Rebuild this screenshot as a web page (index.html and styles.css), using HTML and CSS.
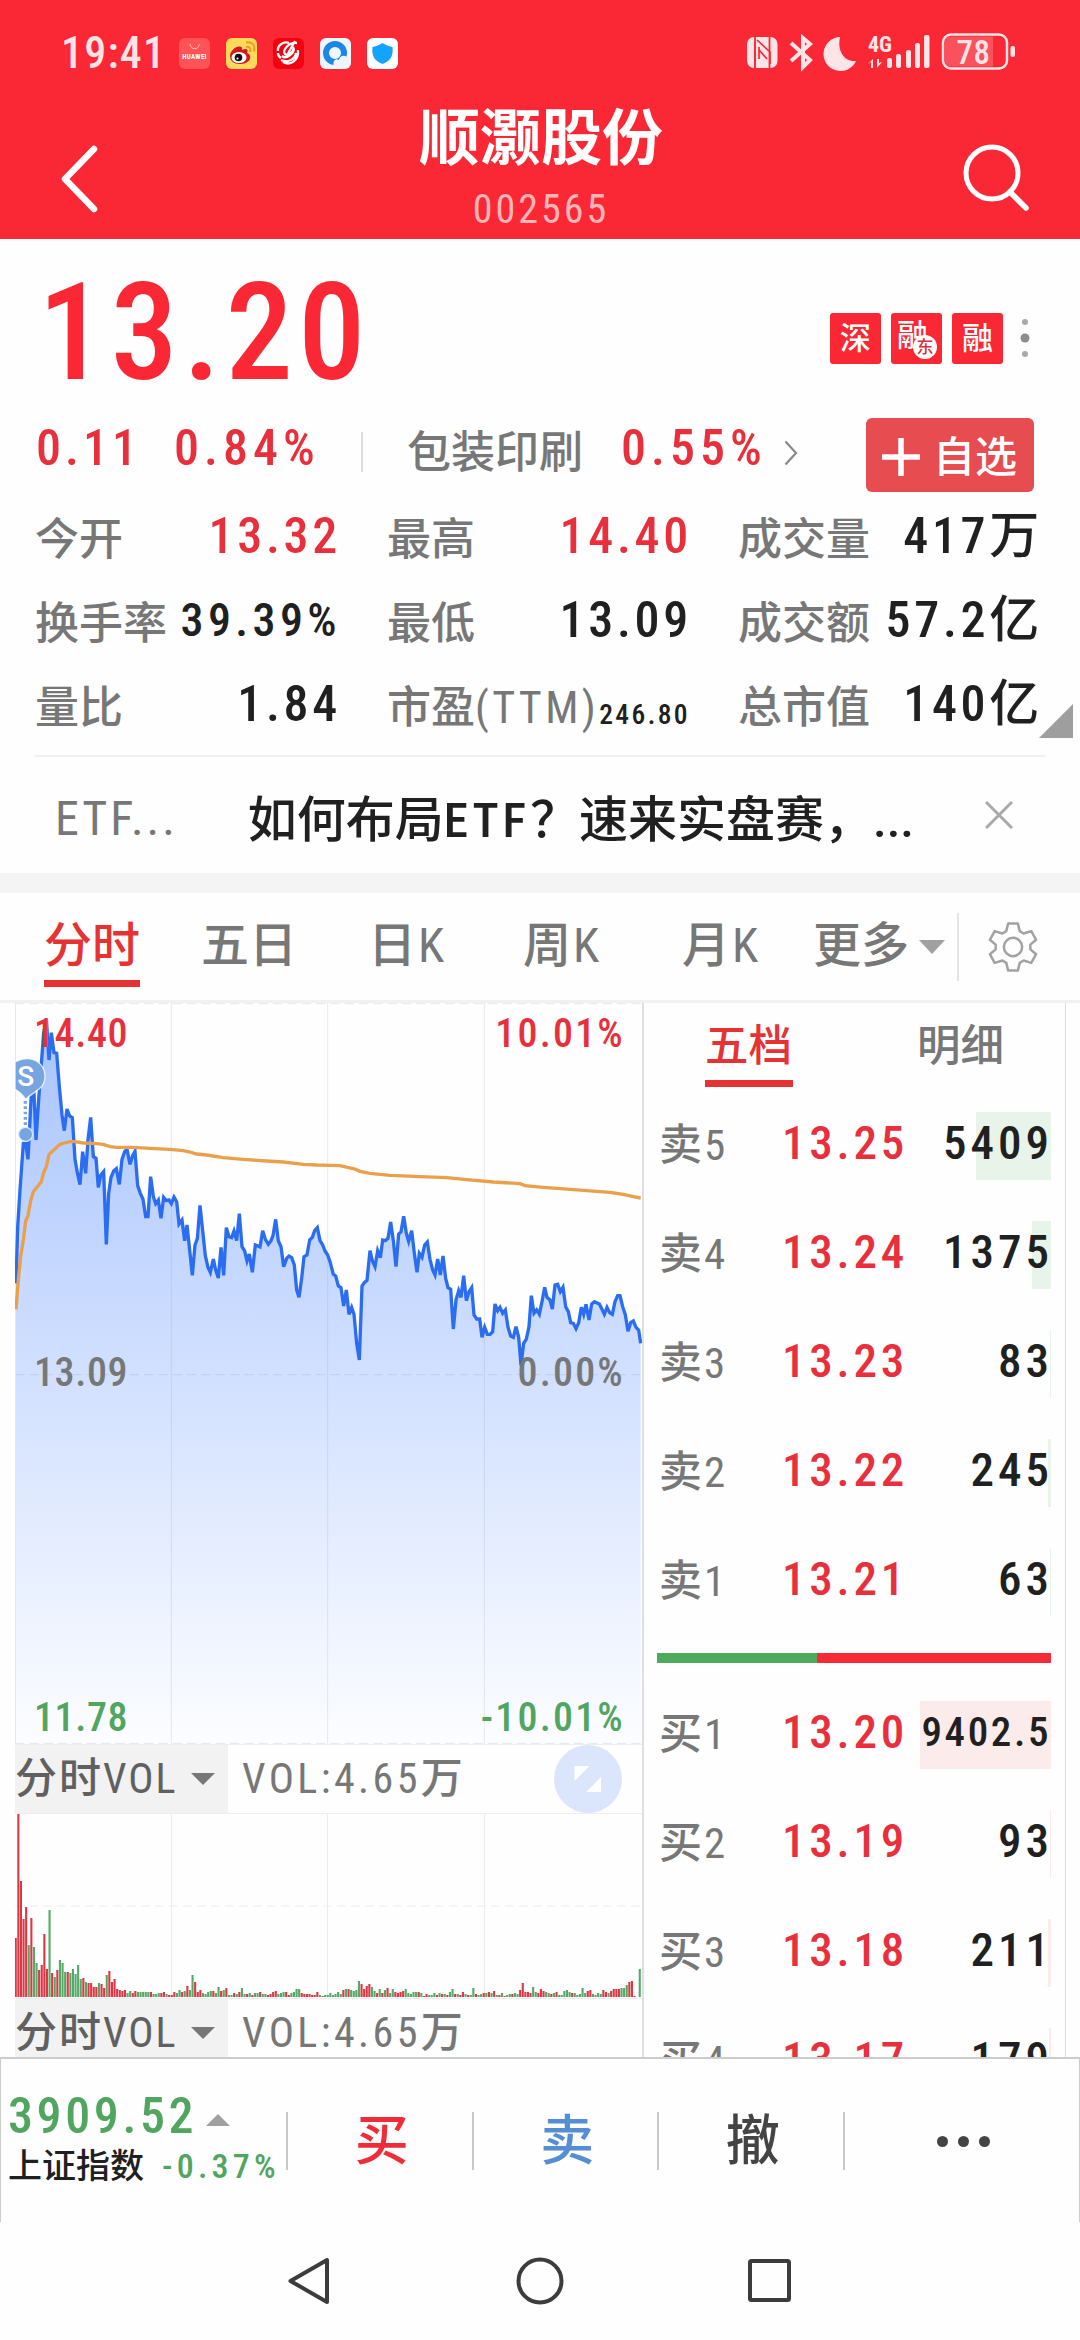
FILE: index.html
```html
<!DOCTYPE html>
<html lang="zh-CN">
	<head>
		<meta charset="utf-8">
		<meta name="viewport" content="width=1080">
		<title>顺灏股份 002565</title>
		<link rel="stylesheet" href="styles.css">
	</head>
	<body>
		<div class="header">
			<div class="status">
				<span class="clock">19:41</span>
				<div class="apps">
					<svg viewBox="0 0 31 31"><rect width="31" height="31" rx="6" fill="#ff5358"/><path d="M11 6a4.7 4.7 0 0 0 9.400 0" fill="none" stroke="#ffc9c9"/><text x="15.500" y="21" class="hw">HUAWEI</text></svg>
					<svg viewBox="0 0 31 31"><rect width="31" height="31" rx="6" fill="#ffd95a"/><path d="M4 18c0-5 7-11 11-9 2 0 1 3 1 3 4-2 7-1 5 3 6 2 4 11-7 11C8 26 4 23 4 18z" fill="#d7161f"/><ellipse cx="13" cy="19.500" rx="7.500" ry="5.500" fill="#fff"/><circle cx="12.500" cy="19.500" r="3.800" fill="#111"/><circle cx="11.500" cy="20.500" r="1" fill="#fff"/><path d="M20 9c4-1 5 2 4 5M20 4.500c7-1 9.500 4 8 9" fill="none" stroke="#ee9b20" stroke-width="2"/></svg>
					<svg viewBox="0 0 31 31"><rect width="31" height="31" rx="6" fill="#f5000f"/><path d="M24 5C15 4 9 13 12 16s10-3 8-7c3 5-6 13-11 9M22 3L13 19M5 13C4 7 11 3 16 5M5 15c0 3 1 4 3 5M10 24c7 4 16-1 15-12M8 22c6 3 14 0 15-7" fill="none" stroke="#fff" stroke-width="2.300"/></svg>
					<svg viewBox="0 0 31 31"><rect width="31" height="31" rx="6" fill="#eef6ff"/><circle cx="15" cy="15" r="9" fill="none" stroke="#1c86e6" stroke-width="6"/><path d="M14 28c-2-5 2-8 5-6 1-6 9-5 9 0 4 3 2 6-1 6z" fill="#eef6ff"/></svg>
					<svg viewBox="0 0 31 31"><rect width="31" height="31" rx="6" fill="#fff"/><path d="M15.500 5c3 2 6 3 10 4 1 9-2 14-10 17C7.500 23 4.500 18 5.500 9c4-1 7-2 10-4z" fill="#12a4ff"/></svg>
				</div>
				<svg class="sysicons" viewBox="745 30 275 46">
					<rect x="747" y="37" width="30.500" height="31" rx="7" fill="#fde4e6"/>
					<path d="M755 36.500v31.500M769.500 37v31.500" stroke="#fa2834" stroke-width="1.800"/>
					<path d="M757 40l13 12v12M755 42v26M759 47v12M759 50l8 9" fill="none" stroke="#fa2834" stroke-width="1.700"/>
					<g fill="#fde4e6">
						<path d="M840 37a17 17 0 1 0 16 24c-12 1-19-10-16-24z"/>
						<rect x="887" y="58" width="5" height="10" rx="2"/><rect x="896" y="54" width="5" height="14" rx="2"/><rect x="906" y="50" width="5" height="18" rx="2"/><rect x="915" y="43" width="5" height="25" rx="2"/><rect x="924" y="35" width="5.500" height="33" rx="2"/>
						<rect x="1010.500" y="46" width="4.500" height="11" rx="2"/>
						<path d="M868 64l5-5v9h-2v-6zM882 62l-5 6v-9h2v4z"/>
					</g>
					<path d="M791 43l19 17-7 7V38l7 6-19 17" fill="none" stroke="#fde4e6" stroke-width="4"/>
					<rect x="943" y="34.500" width="64" height="34" rx="8" fill="none" stroke="#fde4e6" stroke-width="2.500"/>
					<path d="M951 36.500h42v30h-42q-6 0-6-6v-18q0-6 6-6z" fill="#fb515c"/>
					<text x="868" y="52" class="net">4G</text>
					<text x="956.500" y="63.500" class="bat">78</text>
				</svg>
			</div>
			<div class="title">
				<svg class="back" viewBox="0 0 40 70"><path d="M34 4L5 34l29 30" fill="none" stroke="#fff" stroke-width="6.500" stroke-linecap="round" stroke-linejoin="round"/></svg>
				<div class="name"><h1>顺灏股份</h1><p>002565</p></div>
				<svg class="search" viewBox="0 0 70 72"><circle cx="30" cy="31" r="26" fill="none" stroke="#fff" stroke-width="5"/><path d="M48 50l16 16" stroke="#fff" stroke-width="5.500" stroke-linecap="round"/></svg>
			</div>
		</div>

		<div class="quote">
			<div class="now">
				<b class="price">13.20</b>
				<div class="badges">
					<i>深</i><i class="dong">融<em>东</em></i><i>融</i>
					<svg viewBox="0 0 12 42"><circle cx="6" cy="5" r="3" fill="#aaa"/><circle cx="6" cy="21" r="4.500" fill="#8c8c8c"/><circle cx="6" cy="37" r="3" fill="#aaa"/></svg>
				</div>
			</div>
			<div class="change">
				<b class="c1">0.11</b><b class="c2">0.84%</b><span class="vline"></span><span class="sector">包装印刷</span><b class="c3">0.55%</b>
				<svg class="more" viewBox="0 0 14 26"><path d="M1.500 1.500L12 13 1.500 24.500" fill="none" stroke="#888" stroke-width="2.200"/></svg>
				<span class="add"><svg viewBox="0 0 38 38"><path d="M19 0v38M0 19h38" stroke="#fff" stroke-width="5.500"/></svg>自选</span>
			</div>
			<div class="stats">
				<div><span>今开</span><b class="red">13.32</b></div>
				<div><span>最高</span><b class="red">14.40</b></div>
				<div><span>成交量</span><b>417万</b></div>
				<div><span>换手率</span><b class="mid">39.39%</b></div>
				<div><span>最低</span><b>13.09</b></div>
				<div><span>成交额</span><b>57.2亿</b></div>
				<div><span>量比</span><b>1.84</b></div>
				<div><span>市盈<u>(TTM)</u></span><b class="small">246.80</b></div>
				<div><span>总市值</span><b>140亿</b></div>
			</div>
			<span class="corner"></span>
			<div class="news">
				<span>ETF...</span><b>如何布局<u>ETF</u>？速来实盘赛，...</b>
				<svg viewBox="0 0 28 28"><path d="M1 1l26 26M27 1L1 27" stroke="#aaa" stroke-width="3"/></svg>
			</div>
		</div>

		<div class="tabs">
			<span class="on">分时</span><span class="t2">五日</span><span class="t3">日K</span><span class="t4">周K</span><span class="t5">月K</span><span class="t6">更多</span><i class="down"></i>
			<svg viewBox="0 0 54 54"><path d="M22 2.500h10l2 8 4 2.500 8-2.500 5 9-6 5v5l6 5-5 9-8-2.500-4 2.500-2 8H22l-2-8-4-2.500-8 2.500-5-9 6-5v-5l-6-5 5-9 8 2.500 4-2.500z" fill="none" stroke="#a2a2a2" stroke-width="2.600" stroke-linejoin="round"/><circle cx="27" cy="27" r="9.500" fill="none" stroke="#a2a2a2" stroke-width="2.600"/></svg>
		</div>

		<div class="board">
			<div class="charts">
				<div class="trend">
					<!-- 3 units per px -->
					<svg viewBox="45 39 1881 2223">
						<defs><linearGradient id="fill" x1="0" y1="75" x2="0" y2="2262" gradientUnits="userSpaceOnUse"><stop offset="0" stop-color="#a8c4ff"/><stop offset="1" stop-color="#fcfdff"/></linearGradient></defs>
						<polygon id="area" fill="url(#fill)"/>
						<path d="M514 39v2223M983 39v2223M1453 39v2223" stroke="#758096" stroke-opacity=".16" stroke-width="3"/>
						<path d="M45 1154h1881M45 41h1881M45 2260h1881" stroke="#758096" stroke-opacity=".18" stroke-width="3" stroke-dasharray="28 15"/>
						<path d="M46.500 39v2223" stroke="#e6e8ee" stroke-width="3"/>
						<polyline id="line" fill="none" stroke="#2a6df0" stroke-width="10"/>
						<polyline id="avg" fill="none" stroke="#eaa04a" stroke-width="10"/>
						<path d="M45 216C95 190 135 220 135 258c0 40-30 42-58 70-10-15-18-22-32-30z" fill="#76a5df" stroke="#fff" stroke-opacity=".8" stroke-width="4"/>
						<path d="M76 330v90" stroke="#fff" stroke-width="15"/><path d="M76 333v80" stroke="#76a5df" stroke-width="10" stroke-dasharray="8 8"/>
						<circle cx="77" cy="433" r="21" fill="#76a5df" stroke="#d8e7fa" stroke-width="4"/>
						<text x="77" y="287" class="sell">S</text>
					</svg>
					<b class="lt red">14.40</b><b class="rt red">10.01%</b>
					<b class="lm">13.09</b><b class="rm">0.00%</b>
					<b class="lb">11.78</b><b class="rb">-10.01%</b>
				</div>
				<div class="bar"><span>分时VOL<i></i></span><em>VOL:4.65万</em>
					<svg class="expand" viewBox="0 0 68 68"><circle cx="34" cy="34" r="34" fill="#dbe5fb"/><path d="M20.500 21h15l-15 15zM47 32v15H32z" fill="#fff"/></svg>
				</div>
				<svg class="vol" id="vol" viewBox="0 0 627 184"><path d="M156.500 0v184M312.500 0v184M469.500 0v184" stroke="#ececec"/><path d="M0 92h627" stroke="#ececec" stroke-dasharray="9 5"/></svg>
				<div class="bar second"><span>分时VOL<i></i></span><em>VOL:4.65万</em></div>
			</div>
			<div class="book">
				<div class="head"><span class="on">五档</span><span>明细</span></div>
				<div class="row sells"><span>卖5</span><b>13.25</b><em>5409</em><i style="width:75px"></i></div>
				<div class="row sells"><span>卖4</span><b>13.24</b><em>1375</em><i style="width:19px"></i></div>
				<div class="row sells"><span>卖3</span><b>13.23</b><em>83</em><i style="width:1px"></i></div>
				<div class="row sells"><span>卖2</span><b>13.22</b><em>245</em><i style="width:3px"></i></div>
				<div class="row sells"><span>卖1</span><b>13.21</b><em>63</em><i style="width:1px"></i></div>
				<div class="ratio"><i style="width:160px"></i></div>
				<div class="row"><span>买1</span><b>13.20</b><em class="long">9402.5</em><i style="width:131px"></i></div>
				<div class="row"><span>买2</span><b>13.19</b><em>93</em><i style="width:1px"></i></div>
				<div class="row"><span>买3</span><b>13.18</b><em>211</em><i style="width:3px"></i></div>
				<div class="row"><span>买4</span><b>13.17</b><em>179</em><i style="width:2px"></i></div>
			</div>
		</div>

		<div class="trade">
			<div class="index">
				<p class="point">3909.52<i></i></p>
				<p class="pct"><span>上证指数</span><b>-0.37%</b></p>
			</div>
			<span class="buy">买</span><span class="sale">卖</span><span class="undo">撤</span>
			<span class="dots"><i></i><i></i><i></i></span>
		</div>
		<div class="nav">
			<svg viewBox="0 0 1080 118"><g fill="none" stroke="#3c3c3c" stroke-width="4" stroke-linejoin="round"><path d="M327 38v42L290.500 59z"/><circle cx="540" cy="59" r="21.500"/><rect x="750" y="39" width="39" height="39" rx="1.500"/></g></svg>
		</div>
		<script src="chart.js"></script>
	</body>
</html>
```
FILE: styles.css
```css
*{
	box-sizing: border-box;
	margin: 0;
	padding: 0;
}
body{
	width: 1080px;
	height: 2340px;
	overflow: hidden;
	background-color: #fefefe;
	color: #202020;
	font-family: Roboto, "Noto Sans CJK SC", sans-serif;
	font-weight: 450;
	font-stretch: 87%;
}
b{ font-weight: 500; }
i, em{ font-style: normal; }
u{ text-decoration: none; }
svg{ display: block; flex: none; }
.red{ color: #e8303c; }

/* header */
.header{
	height: 239px;
	background-color: #fa2834;
	color: #fff;
}
.status{
	display: flex;
	align-items: center;
	height: 88px;
	padding: 18px 60px 0 61px;
}
.clock{
	width: 118px;
	font-size: 44px;
	font-weight: 500;
	letter-spacing: 1.2px;
	color: #ffe3e5;
}
.apps{
	display: flex;
	gap: 16px;
}
.apps svg{ width: 31px; height: 31px; }
.hw{ font-size: 7px; font-weight: 700; fill: #fff; text-anchor: middle; letter-spacing: 0.3px; }
.sysicons{
	width: 275px;
	height: 46px;
	margin-left: auto;
}
.net{ font-size: 22px; font-weight: 700; fill: #fde4e6; }
.bat{ font-size: 33px; font-weight: 500; fill: #fde4e6; letter-spacing: 0.5px; }
.title{
	display: flex;
	justify-content: space-between;
	padding: 0 49px 0 60px;
	height: 151px;
}
.back{ width: 40px; height: 70px; margin-top: 57px; }
.search{ width: 70px; height: 72px; margin-top: 54px; margin-right: -1px; }
.name{
	text-align: center;
	padding-left: 20px;
}
.name h1{
	font-size: 61px;
	font-weight: 600;
	line-height: 80px;
	margin-top: 11px;
}
.name p{
	font-size: 40px;
	line-height: 46px;
	margin-top: 8px;
	letter-spacing: 3px;
	color: #ffb4b9;
}

/* quote */
.quote{
	position: relative;
	height: 634px;
}
.now{
	display: flex;
	justify-content: space-between;
	height: 179px;
	padding-left: 38px;
}
.price{
	font-size: 135px;
	line-height: 188px;
	letter-spacing: 5px;
	color: #fa2834;
}
.badges{
	display: flex;
	gap: 10px;
	padding-top: 74px;
	margin-right: 49px;
}
.badges i{
	position: relative;
	width: 51px;
	height: 51px;
	border-radius: 3px;
	background-color: #fa2834;
	color: #fff;
	font-size: 31px;
	line-height: 51px;
	text-align: center;
}
.badges .dong{ line-height: 45px; padding-right: 8px; }
.badges em{
	position: absolute;
	right: 5px;
	bottom: 5px;
	width: 24px;
	height: 24px;
	border-radius: 50%;
	background-color: #fff;
	color: #d8313a;
	font-size: 17px;
	line-height: 24px;
}
.badges svg{ width: 12px; height: 42px; margin: 4px 0 0 6px; }
.change{
	display: flex;
	align-items: center;
	height: 76px;
	padding-left: 36px;
	font-size: 50px;
	color: #e8303c;
}
.change b{ line-height: 58px; margin-bottom: 16px; letter-spacing: 5px; }
.change .c1{ width: 138px; letter-spacing: 4px; }
.change .c2{ width: 187px; }
.vline{
	width: 2px;
	height: 40px;
	margin-bottom: 8px;
	background-color: #ddd;
}
.sector{
	margin: 0 0 15px 44px;
	width: 214px;
	font-size: 44px;
	color: #777;
}
.change .c3{ width: 163px; }
.more{ width: 14px; height: 26px; margin-bottom: 6px; }
.add{
	display: flex;
	align-items: center;
	width: 168px;
	height: 74px;
	margin-left: 68px;
	margin-top: -2px;
	padding: 0 0 4px 16px;
	gap: 13px;
	border-radius: 6px;
	background-color: #e64c50;
	color: #fff;
	font-size: 42px;
	font-weight: 500;
}
.add svg{ width: 38px; height: 38px; margin-top: 8px; }
.stats{
	display: grid;
	grid-template-columns: 302px 301px 301px;
	grid-auto-rows: 84px;
	column-gap: 50px;
	padding-left: 35px;
}
.stats div{
	display: flex;
	justify-content: space-between;
	align-items: center;
	white-space: nowrap;
}
.stats span{ font-size: 44px; color: #777; }
.stats u{ letter-spacing: 3.4px; }
.stats b{
	font-size: 50px;
	line-height: 60px;
	margin: 0 -4px 1px 0;
	letter-spacing: 3.7px;
}
.stats .mid{ font-size: 46px; letter-spacing: 4.4px; }
.stats .small{
	font-size: 27.5px;
	margin: 22px -2px 0 -6px;
	letter-spacing: 2.4px;
}
.corner{
	position: absolute;
	left: 1039px;
	top: 465px;
	border-left: 34px solid transparent;
	border-bottom: 34px solid #9e9e9e;
}
.news{
	display: flex;
	align-items: center;
	height: 119px;
	margin: 9px 34px 0;
	padding: 0 33px 0 21px;
	border-top: 2px solid #f1f1f1;
	font-size: 48px;
}
.news span{ width: 193px; color: #777; font-size: 48px; letter-spacing: 3px; margin-top: 6px; }
.news b{ width: 738px; white-space: nowrap; font-size: 49px; }
.news u{ letter-spacing: 4px; }
.news svg{ width: 28px; height: 28px; margin-top: -2px; }

/* period tabs */
.tabs{
	display: flex;
	align-items: center;
	height: 130px;
	padding-left: 44px;
	border-top: 20px solid #f4f4f4;
	border-bottom: 3px solid #f1f1f1;
	font-size: 48px;
	color: #777;
}
.tabs span{
	line-height: 102px;
	height: 92px;
	margin-top: -11px;
	white-space: nowrap;
}
.tabs .on{
	width: 96px;
	border-bottom: 7px solid #e63232;
	color: #e63232;
	font-weight: 500;
}
.t2{ margin-left: 61px; width: 167px; }
.tabs .t3, .tabs .t4, .tabs .t5{ letter-spacing: 2px; }
.t3{ width: 155px; }
.t4{ width: 159px; }
.t5{ width: 131px; }
.t6{ width: 106px; }
.down{
	border: 13px solid transparent;
	border-top: 14px solid #a0a0a0;
	border-bottom: 0;
}
.tabs svg{
	width: 82px;
	height: 68px;
	margin-left: 12px;
	padding: 7px 0 7px 28px;
	border-left: 2px solid #e4e4e4;
}

/* chart + order book */
.board{
	display: flex;
	height: 1054px;
	padding-left: 15px;
	overflow: hidden;
}
.charts{ width: 627px; }
.trend{ position: relative; height: 741px; }
.trend svg{ width: 627px; height: 741px; }
.trend b{
	position: absolute;
	font-size: 40px;
	line-height: 40px;
	letter-spacing: 0.6px;
}
.sell{
	font-size: 84px;
	font-weight: 500;
	font-stretch: 100%;
	fill: #fff;
	text-anchor: middle;
}
.trend .lt, .trend .lm, .trend .lb{ left: 19px; }
.trend .rt, .trend .rm, .trend .rb{ right: 17px; letter-spacing: 2.2px; }
.lt, .rt{ top: 11px; }
.lm, .rm{ top: 350px; color: #777; }
.lb, .rb{ top: 695px; color: #50a55f; }
.bar{
	display: flex;
	align-items: center;
	height: 70px;
	border-top: 1px solid #eee;
	border-bottom: 1px solid #eee;
	font-size: 42px;
	line-height: 60px;
	letter-spacing: 2px;
	color: #777;
}
.bar span{
	display: flex;
	align-items: center;
	justify-content: space-between;
	width: 213px;
	height: 100%;
	padding-right: 13px;
	background-color: #f2f2f2;
	color: #606060;
}
.bar i{
	border: 12px solid transparent;
	border-top: 12px solid #777;
	border-bottom: 0;
}
.bar em{ margin-left: 14px; letter-spacing: 3.400px; }
.expand{ width: 68px; height: 68px; margin-left: auto; margin-right: 20px; }
.vol{ width: 627px; height: 184px; }
.book{
	width: 424px;
	border-left: 2px solid #dcdfe3;
	border-right: 1px solid #ddd;
	padding-left: 13px;
}
.head{
	display: flex;
	height: 88px;
	padding-left: 48px;
	gap: 124px;
	font-size: 43.5px;
	color: #777;
}
.head span{ height: 84px; line-height: 87px; }
.head .on{
	width: 88px;
	border-bottom: 7px solid #e63232;
	color: #e63232;
	font-weight: 500;
}
.row{
	position: relative;
	display: flex;
	align-items: center;
	width: 394px;
	height: 109px;
	padding: 0 0 6px 2px;
}
.row span{ width: 123px; font-size: 43px; color: #777; margin-top: -3px; letter-spacing: 2px; }
.row b{ font-size: 47px; color: #e8303c; letter-spacing: 3.8px; }
.row em{
	margin: 0 -2px 0 auto;
	font-size: 47px;
	font-weight: 500;
	letter-spacing: 4px;
}
.row .long{ font-size: 41px; letter-spacing: 2.6px; margin-right: 0; }
.row span, .row b, .row em{ position: relative; z-index: 1; }
.row i{
	position: absolute;
	right: 0;
	top: 21px;
	height: 68px;
	background-color: #fcebeb;
}
.sells i{ background-color: #e8f3ea; }
.ratio{
	height: 10px;
	width: 394px;
	margin: 17px 0;
	background-color: #f52c37;
}
.ratio i{ display: block; height: 10px; background-color: #4fab5c; }

/* bottom bar */
.trade{
	display: flex;
	height: 165px;
	border: 1px solid #ccc;
	border-top-width: 2px;
	border-bottom: 0;
	background-color: #fefefe;
}
.index{ width: 285px; padding: 27px 0 0 7px; white-space: nowrap; }
.point{
	display: flex;
	align-items: center;
	gap: 9px;
	font-size: 50px;
	line-height: 60px;
	font-weight: 500;
	letter-spacing: 3.600px;
	color: #50a55f;
}
.point i{
	margin-top: 8px;
	border: 12px solid transparent;
	border-bottom: 12px solid #a0a0a0;
	border-top: 0;
}
.pct{
	display: flex;
	gap: 18px;
	line-height: 40px;
	font-size: 34px;
	font-weight: 500;
}
.pct b{ font-size: 34px; color: #50a55f; letter-spacing: 4.2px; }
.trade > span{
	display: flex;
	align-items: center;
	justify-content: center;
	width: 185.500px;
	height: 58px;
	line-height: 58px;
	margin-top: 53px;
	padding: 2px 0 0 4px;
	border-left: 2px solid #c8c8c8;
	font-size: 54px;
	font-weight: 500;
}
.trade .buy{ color: #f02c38; }
.trade .sale{ color: #568ed4; }
.trade .undo{ color: #444; }
.trade .dots{ flex: 1; gap: 10px; padding-top: 0; }
.dots i{ width: 11px; height: 11px; border-radius: 50%; background-color: #444; }
.nav svg{ width: 1080px; height: 118px; }
```
FILE: chart.js
```js
// price of the day, one point per minute
var early = "48,880 53,712 60,600 70,460 77,460 84,508 94,310 102,310 108,450 118,300 131,130 139,85 147,210 154,128 162,188 170,190 178,290 186,375 193,422 201,357 209,378 217,383 225,508 232,548 240,584 248,485 257,550 264,450 272,382 280,500 288,505 295,592 302,556 311,545 319,763 326,610 333,562 341,543 349,536 358,583 366,508 374,485 381,478 390,523 398,497 405,484 413,587 421,610 429,628 437,680 444,680 452,560 460,620 467,641 475,630 483,685 491,622 499,632 507,630 514,641 522,621 530,635 537,702 546,690 554,752 561,705 577,856 585,765 592,746 600,646 608,722 616,797 624,832 631,847 640,807 647,840 655,864 663,772 671,856 679,713 687,740 695,743 702,723 710,752 718,671 726,770 734,783 741,813 748,792 757,847 766,765 780,771 788,722 796,748 805,763 813,752 819,737 827,688 835,753 843,770 851,830 860,805 867,798 875,803 883,825 890,900 897,922 905,865 912,800 921,795 929,750 937,742 944,722 952,713 960,752 968,765 975,783 983,795";
var late = "30,485 40,523 47,528 55,558 63,563 71,618 79,570 87,643 95,622 102,643 110,730 118,780 126,558 133,548 141,541 150,452 158,485 165,500 173,452 181,473 188,420 196,422 204,415 212,366 220,422 228,500 236,402 243,396 251,349 259,400 266,424 275,392 283,460 291,517 298,460 306,472 314,435 322,426 330,478 338,510 345,525 353,477 361,525 369,468 377,535 384,563 392,568 400,687 408,600 416,572 423,592 431,527 439,602 447,575 455,563 462,645 470,657 479,657 486,712 494,682 502,703 510,703 518,695 525,612 533,632 540,622 548,640 556,630 564,682 572,708 580,712 588,680 596,712 603,795 611,730 619,717 627,680 634,587 642,640 650,630 658,643 666,605 674,562 681,592 690,600 697,627 705,555 713,553 721,575 729,562 737,620 745,635 752,668 760,670 768,686 776,668 784,622 791,643 798,613 807,660 815,612 823,605 838,612 846,628 853,643 861,622 869,638 877,643 885,605 893,587 900,587 908,620 916,645 924,694 932,668 940,663 948,682 956,690 962,730";
var avgEarly = "48,958 55,870 62,798 70,750 77,693 84,677 92,632 100,605 112,590 124,575 131,548 139,530 147,494 158,483 168,474 180,463 193,459 210,455 225,455 250,459 280,460 310,463 330,470 350,472 400,472 450,475 510,478 550,482 570,486 590,492 620,495 670,503 730,508 800,513 850,516 910,523 950,525";
var avgLate = "30,196 60,197 105,207 120,214 150,220 210,226 300,230 380,233 440,239 520,246 600,251 615,257 670,262 760,269 870,277 910,283 940,290 962,294";

function shift(s) {
	return s.split(" ").map(function (p) {
		p = p.split(",");
		return (+p[0] + 960) + "," + (+p[1] + 330);
	}).join(" ");
}
var price = early + " " + shift(late);
document.getElementById("line").setAttribute("points", price);
document.getElementById("area").setAttribute("points", "48,2262 " + price + " 1922,2262");
document.getElementById("avg").setAttribute("points", avgEarly + " " + shift(avgLate));

// volume per minute, negative = falling
var vol = [59,183,116,78,90,-52,79,-50,-34,27,32,63,28,-87,24,-20,27,-37,-34,-25,25,-24,-28,-23,-32,-18,19,-15,14,14,
	10,10,-14,13,9,-22,26,15,18,8,7,6,7,-4,-6,4,6,-5,-5,-5,-5,-5,5,-3,-3,-4,4,5,-3,2,
	2,5,-4,-7,5,-6,11,-7,-22,15,5,7,-4,-3,-5,-6,6,-4,-10,6,-7,9,-2,-2,4,-3,5,-9,-3,3,
	-4,2,-4,-4,5,-3,-3,2,3,5,6,-3,-4,-5,5,2,-4,-5,-8,-8,4,3,3,3,2,2,5,-2,1,-2,
	-2,-4,-2,-3,-5,-3,7,-8,8,-7,-6,-7,-16,13,8,11,13,-10,-6,4,-8,4,-7,9,-4,-8,5,4,5,6,
	-8,-4,-3,-5,-5,5,-4,1,3,-2,-2,-4,2,-4,3,-3,2,-5,-8,3,-3,2,5,-3,2,-2,-9,3,-2,-3,
	4,-4,5,-4,6,-2,2,-4,1,-2,-3,3,-4,-3,7,14,5,5,4,-10,-5,4,8,6,-5,-4,3,-4,5,-2,
	-2,-6,-7,-5,4,-4,-2,-3,-9,-4,6,7,-3,-2,-4,-3,7,5,-4,6,8,8,8,-9,-9,-12,15,16,1,0,-28];
var bars = "";
vol.forEach(function (v, i) {
	var h = Math.abs(v);
	bars += '<rect x="' + (i * 2.6 - 0.3).toFixed(1) + '" y="' + (183 - h) + '" width="2.100" height="' + h + '" fill="' + (v < 0 ? "#55a866" : "#dd3743") + '"/>';
});
document.getElementById("vol").innerHTML += bars;
```
